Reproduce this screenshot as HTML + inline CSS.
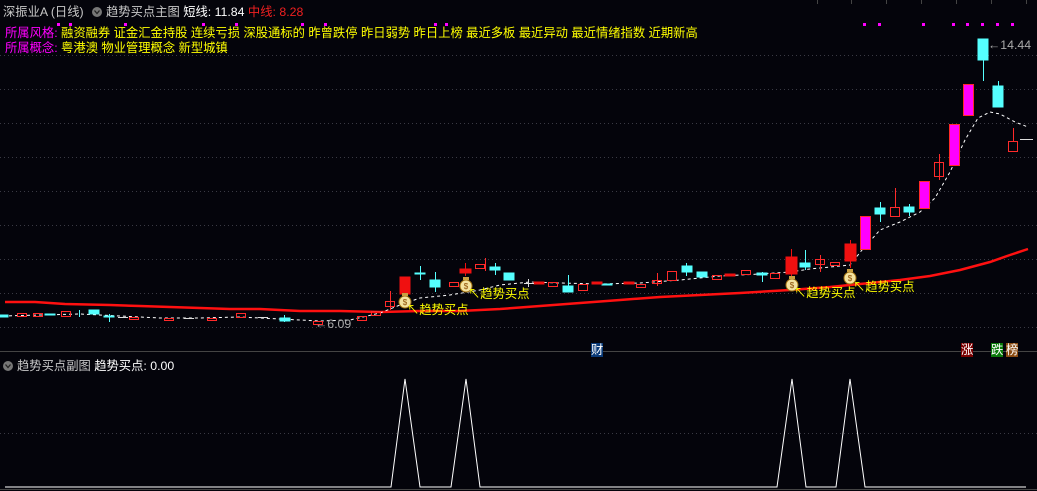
<!DOCTYPE html>
<html><head><meta charset="utf-8"><style>
html,body{margin:0;padding:0;background:#04040b;width:1037px;height:491px;overflow:hidden;font-family:"Liberation Sans","Noto Sans CJK SC",sans-serif}
.t{position:absolute;white-space:nowrap;font-size:12.3px;line-height:14px}
</style></head><body>
<svg width="1037" height="491" style="position:absolute;left:0;top:0" xmlns="http://www.w3.org/2000/svg">
<g stroke="#3a3a44" stroke-dasharray="1 3" stroke-width="1">
<line x1="0" y1="55.5" x2="1037" y2="55.5"/><line x1="0" y1="89.5" x2="1037" y2="89.5"/>
<line x1="0" y1="123.5" x2="1037" y2="123.5"/><line x1="0" y1="157.5" x2="1037" y2="157.5"/>
<line x1="0" y1="191.5" x2="1037" y2="191.5"/><line x1="0" y1="225.5" x2="1037" y2="225.5"/>
<line x1="0" y1="259.5" x2="1037" y2="259.5"/><line x1="0" y1="293.5" x2="1037" y2="293.5"/>
<line x1="0" y1="327.5" x2="1037" y2="327.5"/><line x1="0" y1="433.5" x2="1037" y2="433.5"/>
</g>
<g stroke="#444" stroke-width="1">
<line x1="0" y1="351.5" x2="1037" y2="351.5"/><line x1="0" y1="489.5" x2="1037" y2="489.5"/>
<line x1="817.5" y1="0" x2="817.5" y2="4"/><line x1="851.5" y1="0" x2="851.5" y2="4"/><line x1="886.5" y1="0" x2="886.5" y2="4"/><line x1="921.5" y1="0" x2="921.5" y2="4"/><line x1="956.5" y1="0" x2="956.5" y2="4"/><line x1="991.5" y1="0" x2="991.5" y2="4"/><line x1="1026.5" y1="0" x2="1026.5" y2="4"/>
</g>
<g fill="#ff00ff">
<rect x="863" y="23" width="3" height="3"/><rect x="878" y="23" width="3" height="3"/><rect x="922" y="23" width="3" height="3"/><rect x="952" y="23" width="3" height="3"/><rect x="966" y="23" width="3" height="3"/><rect x="981" y="23" width="3" height="3"/><rect x="996" y="23" width="3" height="3"/><rect x="1011" y="23" width="3" height="3"/>
<rect x="57" y="23" width="3" height="3"/><rect x="69" y="23" width="3" height="3"/><rect x="124" y="23" width="3" height="3"/><rect x="202" y="23" width="3" height="3"/><rect x="235" y="23" width="3" height="3"/><rect x="301" y="23" width="3" height="3"/><rect x="324" y="23" width="3" height="3"/><rect x="434" y="23" width="3" height="3"/><rect x="445" y="23" width="3" height="3"/>
</g>
<polyline fill="none" stroke="#ff1010" stroke-width="2.5" points="5,302 35,302 65,304 110,305 140,306 170,307 200,308 230,309 260,309 300,311 340,311 380,312 420,311 460,311 500,309 540,306 580,303 620,300 660,297 700,295 740,293 790,290 830,287 870,283 900,280 930,276 960,270 990,262 1010,255 1028,249"/>
<polyline fill="none" stroke="#fff" stroke-width="1" stroke-dasharray="3 3" points="3,316 40,315 80,314 120,316 160,318 200,318 240,317 280,319 320,321 350,320 380,313 400,305 420,298 450,295 480,290 500,285 530,282 560,283 600,284 640,283 680,280 720,276 760,274 790,272 810,269 850,265 862,250 880,230 900,222 920,212 935,198 950,172 965,140 978,118 990,112 1000,114 1015,122 1028,127"/>
<g stroke-width="1">
<g stroke="#5ff" fill="#5ff">
<rect x="0" y="315" width="8" height="2"/><rect x="45" y="314" width="10" height="1"/><line x1="79.5" y1="310" x2="79.5" y2="317"/><rect x="89" y="310" width="10" height="4"/><line x1="109.5" y1="314" x2="109.5" y2="322"/><rect x="104" y="316" width="10" height="1"/>
<rect x="280" y="318" width="10" height="3"/><line x1="284.5" y1="315" x2="284.5" y2="322"/>
<line x1="420.5" y1="266" x2="420.5" y2="280"/><rect x="415" y="273" width="10" height="1"/>
<line x1="435.5" y1="272" x2="435.5" y2="292"/><rect x="430" y="280" width="10" height="7"/>
<line x1="495.5" y1="263" x2="495.5" y2="275"/><rect x="490" y="267" width="10" height="3"/>
<rect x="504" y="273" width="10" height="7"/>
<line x1="568.5" y1="275" x2="568.5" y2="292"/><rect x="563" y="286" width="10" height="6"/>
<rect x="602" y="284" width="10" height="1"/>
<line x1="686.5" y1="263" x2="686.5" y2="276"/><rect x="682" y="266" width="10" height="6"/>
<rect x="697" y="272" width="10" height="5"/>
<line x1="762.5" y1="272" x2="762.5" y2="282"/><rect x="757" y="273" width="10" height="2"/>
<line x1="805.5" y1="250" x2="805.5" y2="270"/><rect x="800" y="263" width="10" height="4"/>
<line x1="880.5" y1="202" x2="880.5" y2="222"/><rect x="875" y="208" width="10" height="6"/>
<line x1="909.5" y1="204" x2="909.5" y2="216"/><rect x="904" y="207" width="10" height="5"/>
<line x1="983.5" y1="39" x2="983.5" y2="81"/><rect x="978" y="39" width="10" height="21"/>
<line x1="998.5" y1="81" x2="998.5" y2="86"/><rect x="993" y="86" width="10" height="21"/>
</g>
<g stroke="#ff2a2a" fill="none">
<rect x="17.5" y="313.5" width="9" height="3"/><rect x="33.5" y="313.5" width="9" height="3"/><rect x="61.5" y="311.5" width="9" height="5"/>
<rect x="129.5" y="317.5" width="9" height="2"/><rect x="164.5" y="318.5" width="9" height="2"/><rect x="207.5" y="318.5" width="9" height="2"/><rect x="236.5" y="313.5" width="9" height="4"/>
<rect x="313.5" y="321.5" width="9" height="3"/><rect x="357.5" y="316.5" width="9" height="4"/><rect x="371.5" y="311.5" width="9" height="4"/>
<line x1="390.5" y1="291" x2="390.5" y2="310"/><rect x="385.5" y="301.5" width="9" height="5"/>
<rect x="449.5" y="282.5" width="9" height="4"/><line x1="485.5" y1="258" x2="485.5" y2="271"/><rect x="475.5" y="264.5" width="9" height="4"/>
<rect x="548.5" y="282.5" width="9" height="4"/><rect x="578.5" y="284.5" width="9" height="6"/><rect x="636.5" y="284.5" width="9" height="3"/>
<line x1="657.5" y1="273" x2="657.5" y2="286"/><rect x="652.5" y="280.5" width="9" height="3"/>
<rect x="667.5" y="271.5" width="9" height="9"/><rect x="712.5" y="275.5" width="9" height="4"/><rect x="741.5" y="270.5" width="9" height="4"/><rect x="770.5" y="273.5" width="9" height="5"/>
<line x1="820.5" y1="255" x2="820.5" y2="272"/><rect x="815.5" y="259.5" width="9" height="5"/><rect x="830.5" y="262.5" width="9" height="3"/>
<line x1="895.5" y1="188" x2="895.5" y2="207"/><rect x="890.5" y="207.5" width="9" height="9"/>
<line x1="939.5" y1="154" x2="939.5" y2="180"/><rect x="934.5" y="162.5" width="9" height="14"/>
<line x1="1013.5" y1="128" x2="1013.5" y2="141"/><rect x="1008.5" y="141.5" width="9" height="10"/>
</g>
<g fill="#f01010" stroke="#f01010">
<rect x="400" y="277" width="10" height="17"/><line x1="465.5" y1="263" x2="465.5" y2="276"/><rect x="460" y="269" width="11" height="4"/>
<rect x="534" y="282" width="10" height="2"/><rect x="592" y="282" width="10" height="2"/><rect x="624" y="282" width="10" height="2"/><rect x="725" y="274" width="10" height="2"/>
<line x1="791.5" y1="249" x2="791.5" y2="278"/><rect x="786" y="257" width="11" height="17"/>
<line x1="850.5" y1="240" x2="850.5" y2="268"/><rect x="845" y="244" width="11" height="17"/>
</g>
<g fill="#f0f" stroke="#ff2a2a">
<rect x="860.5" y="216.5" width="10" height="33"/><rect x="919.5" y="181.5" width="10" height="27"/><rect x="949.5" y="124.5" width="10" height="41"/><rect x="963.5" y="84.5" width="10" height="31"/>
</g>
<g stroke="#ddd"><line x1="1020" y1="139.5" x2="1033" y2="139.5"/><line x1="118" y1="317.5" x2="128" y2="317.5"/><line x1="184" y1="318.5" x2="194" y2="318.5"/><line x1="258" y1="317.5" x2="268" y2="317.5"/><line x1="524" y1="283.5" x2="534" y2="283.5"/><line x1="528.5" y1="279" x2="528.5" y2="287"/></g>
</g>
<g>
<g transform="translate(405,301)"><ellipse cx="0" cy="1" rx="6" ry="6" fill="#f4e3a0" stroke="#a07010"/><rect x="-3" y="-8" width="6" height="3" fill="#c9a040"/><text x="0" y="4" font-size="8" text-anchor="middle" fill="#8a4a00" font-family="Liberation Sans">$</text></g>
<g transform="translate(466,285)"><ellipse cx="0" cy="1" rx="6" ry="6" fill="#f4e3a0" stroke="#a07010"/><rect x="-3" y="-8" width="6" height="3" fill="#c9a040"/><text x="0" y="4" font-size="8" text-anchor="middle" fill="#8a4a00" font-family="Liberation Sans">$</text></g>
<g transform="translate(792,284)"><ellipse cx="0" cy="1" rx="6" ry="6" fill="#f4e3a0" stroke="#a07010"/><rect x="-3" y="-8" width="6" height="3" fill="#c9a040"/><text x="0" y="4" font-size="8" text-anchor="middle" fill="#8a4a00" font-family="Liberation Sans">$</text></g>
<g transform="translate(850,277)"><ellipse cx="0" cy="1" rx="6" ry="6" fill="#f4e3a0" stroke="#a07010"/><rect x="-3" y="-8" width="6" height="3" fill="#c9a040"/><text x="0" y="4" font-size="8" text-anchor="middle" fill="#8a4a00" font-family="Liberation Sans">$</text></g>
</g>
<polyline fill="none" stroke="#fff" stroke-width="1" points="5,487 391,487 405,379 420,487 451,487 466,379 480,487 777,487 792,379 806,487 836,487 850,379 865,487 1026,487"/>
<circle cx="8" cy="366" r="5" fill="#777"/><path d="M5.5 364.5 L8 367.5 L10.5 364.5" stroke="#222" fill="none" stroke-width="1.3"/>
<circle cx="97" cy="12" r="5" fill="#777"/><path d="M94.5 10.5 L97 13.5 L99.5 10.5" stroke="#222" fill="none" stroke-width="1.3"/>
</svg>
<div class="t" style="left:3px;top:5px;color:#c8c8c8">深振业A (日线)</div>
<div class="t" style="left:106px;top:5px;color:#c8c8c8">趋势买点主图 <span style="color:#fff">短线: 11.84</span> <span style="color:#f02020">中线: 8.28</span></div>
<div class="t" style="left:5px;top:26px;color:#ff00ff">所属风格: <span style="color:#ffff00">融资融券 证金汇金持股 连续亏损 深股通标的 昨曾跌停 昨日弱势 昨日上榜 最近多板 最近异动 最近情绪指数 近期新高</span></div>
<div class="t" style="left:5px;top:41px;color:#ff00ff">所属概念: <span style="color:#ffff00">粤港澳 物业管理概念 新型城镇</span></div>
<div class="t" style="left:407px;top:303px;color:#ffff00">↖趋势买点</div>
<div class="t" style="left:468px;top:287px;color:#ffff00">↖趋势买点</div>
<div class="t" style="left:794px;top:286px;color:#ffff00">↖趋势买点</div>
<div class="t" style="left:853px;top:280px;color:#ffff00">↖趋势买点</div>
<div class="t" style="left:315px;top:317px;color:#aaa">←6.09</div>
<div class="t" style="left:988px;top:38px;color:#aaa">←14.44</div>
<div class="t" style="left:591px;top:343px;background:#0a3a78;color:#fff">财</div>
<div class="t" style="left:961px;top:343px;background:#7a0000;color:#fff">涨</div>
<div class="t" style="left:991px;top:343px;background:#0a7a0a;color:#fff">跌</div>
<div class="t" style="left:1006px;top:343px;background:#8a4a10;color:#fff">榜</div>
<div class="t" style="left:17px;top:359px;color:#c8c8c8">趋势买点副图 <span style="color:#fff">趋势买点: 0.00</span></div>
</body></html>
